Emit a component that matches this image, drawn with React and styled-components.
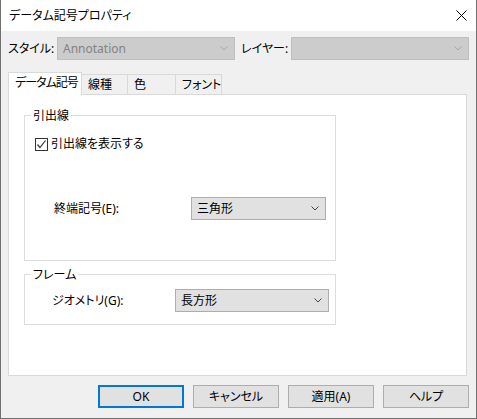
import React, { useState } from "react";
import styled, { createGlobalStyle, css } from "styled-components";

const GlobalStyle = createGlobalStyle`
  body {
    margin: 0;
    font-family: "Noto Sans", "Noto Sans CJK JP", sans-serif;
    font-size: 12px;
    font-feature-settings: "palt";
    color: #000;
  }
`;

const Window = styled.div`
  box-sizing: border-box;
  width: 477px;
  height: 419px;
  background: #f0f0f0;
  border: 1px solid #707070;
  border-top: none;
  display: flex;
  flex-direction: column;
`;

const TitleBar = styled.div`
  height: 31px;
  flex-shrink: 0;
  background: #fff;
  display: flex;
  align-items: center;
  justify-content: space-between;
  padding: 0 9px 0 8px;
  line-height: 16px;
`;

const CloseButton = styled.button`
  border: none;
  background: none;
  padding: 0;
  width: 12px;
  height: 12px;
  display: flex;
  align-items: center;
  justify-content: center;
`;

const Body = styled.div`
  flex: 1;
  display: flex;
  flex-direction: column;
  padding: 6px 7px 0 7px;
`;

const StyleRow = styled.div`
  display: flex;
  align-items: center;
  height: 23px;
`;

const FieldLabel = styled.span`
  width: ${(p) => p.w}px;
  margin-left: ${(p) => p.ml || 0}px;
  flex-shrink: 0;
  line-height: 16px;
  white-space: nowrap;
`;

const Combo = styled.div`
  box-sizing: border-box;
  width: ${(p) => p.w}px;
  height: 23px;
  display: flex;
  align-items: center;
  justify-content: space-between;
  padding: 0 6px 0 5px;
  background: #e1e1e1;
  border: 1px solid #adadad;
  line-height: 16px;
  ${(p) =>
    p.disabled &&
    css`
      background: #cccccc;
      border-color: #bfbfbf;
      color: #838383;
    `}
`;

const TabRow = styled.div`
  display: flex;
  align-items: flex-end;
  margin-top: 12px;
  height: 22px;
  position: relative;
  z-index: 1;
`;

const Tab = styled.div`
  box-sizing: border-box;
  width: ${(p) => p.w}px;
  height: 20px;
  display: flex;
  align-items: center;
  padding-left: 6px;
  line-height: 16px;
  white-space: nowrap;
  background: #f0f0f0;
  border: 1px solid #d9d9d9;
  border-left: none;
  border-bottom: none;
  ${(p) =>
    p.active &&
    css`
      height: 23px;
      margin-bottom: -1px;
      padding-left: 6px;
      padding-bottom: 3px;
      letter-spacing: -1px;
      background: #fff;
      border-left: 1px solid #d9d9d9;
    `}
`;

const Panel = styled.div`
  box-sizing: border-box;
  height: 282px;
  margin-right: 2px;
  background: #fff;
  border: 1px solid #d9d9d9;
  padding: 20px 0 0 15px;
  display: flex;
  flex-direction: column;
`;

const Group = styled.div`
  box-sizing: border-box;
  width: 312px;
  border: 1px solid #dcdcdc;
  display: flex;
  flex-direction: column;
  padding: 0 0 ${(p) => p.pb}px ${(p) => p.pl}px;
  & + & {
    margin-top: 13px;
  }
`;

const Legend = styled.span`
  align-self: flex-start;
  margin: -8px 0 0 -${(p) => p.back - 6}px;
  padding: 0 2px;
  background: #fff;
  line-height: 16px;
`;

const CheckRow = styled.label`
  display: flex;
  align-items: center;
  gap: 3px;
  margin-top: 12px;
  line-height: 16px;
  cursor: default;
`;

const CheckBox = styled.span`
  box-sizing: border-box;
  width: 13px;
  height: 13px;
  border: 1px solid #333;
  background: #fff;
  display: flex;
  align-items: center;
  justify-content: center;
`;

const FormRow = styled.div`
  display: flex;
  align-items: center;
  margin-top: ${(p) => p.mt}px;
  padding-left: ${(p) => p.indent}px;
`;

const ButtonBar = styled.div`
  display: flex;
  justify-content: flex-end;
  gap: 9px;
  margin-top: 9px;
`;

const Button = styled.button`
  box-sizing: border-box;
  width: 86px;
  height: 23px;
  padding: 0;
  font: inherit;
  line-height: 16px;
  color: #000;
  background: #e1e1e1;
  border: 1px solid #adadad;
  ${(p) =>
    p.primary &&
    css`
      border: 2px solid #0078d7;
    `}
`;

const Chevron = ({ color = "#444" }) => (
  <svg width="8" height="5" viewBox="0 0 8 5">
    <polyline points="0.5,0.5 4,4 7.5,0.5" fill="none" stroke={color} strokeWidth="1" />
  </svg>
);

const App = () => {
  const [showLeader, setShowLeader] = useState(true);
  const tabs = [
    { label: "データム記号", w: 74 },
    { label: "線種", w: 46 },
    { label: "色", w: 48 },
    { label: "フォント", w: 46 },
  ];

  return (
    <>
      <GlobalStyle />
      <Window>
        <TitleBar>
          <span>データム記号プロパティ</span>
          <CloseButton>
            <svg width="11" height="11" viewBox="0 0 11 11">
              <path d="M0.5 0.5 L10.5 10.5 M10.5 0.5 L0.5 10.5" stroke="#000" strokeWidth="1" />
            </svg>
          </CloseButton>
        </TitleBar>
        <Body>
          <StyleRow>
            <FieldLabel w={49}>スタイル:</FieldLabel>
            <Combo w={178} disabled>
              <span>Annotation</span>
              <Chevron color="#a6a6a6" />
            </Combo>
            <FieldLabel w={50} ml={6}>レイヤー:</FieldLabel>
            <Combo w={178} disabled>
              <span />
              <Chevron color="#a6a6a6" />
            </Combo>
          </StyleRow>

          <TabRow>
            {tabs.map((t, i) => (
              <Tab key={t.label} w={t.w} active={i === 0}>
                {t.label}
              </Tab>
            ))}
          </TabRow>
          <Panel>
            <Group pl={10} pb={40}>
              <Legend back={10}>引出線</Legend>
              <CheckRow onClick={() => setShowLeader(!showLeader)}>
                <CheckBox>
                  {showLeader && (
                    <svg width="11" height="11" viewBox="0 0 11 11">
                      <polyline points="1.5,5.5 4,8.5 9.5,1.5" fill="none" stroke="#333" strokeWidth="1.2" />
                    </svg>
                  )}
                </CheckBox>
                引出線を表示する
              </CheckRow>
              <FormRow mt={45} indent={19}>
                <FieldLabel w={137}>終端記号(E):</FieldLabel>
                <Combo w={135}>
                  <span>三角形</span>
                  <Chevron />
                </Combo>
              </FormRow>
            </Group>
            <Group pl={27} pb={12}>
              <Legend back={27}>フレーム</Legend>
              <FormRow mt={6} indent={0}>
                <FieldLabel w={123}>ジオメトリ(G):</FieldLabel>
                <Combo w={154}>
                  <span>長方形</span>
                  <Chevron />
                </Combo>
              </FormRow>
            </Group>
          </Panel>

          <ButtonBar>
            <Button primary>OK</Button>
            <Button>キャンセル</Button>
            <Button>適用(A)</Button>
            <Button>ヘルプ</Button>
          </ButtonBar>
        </Body>
      </Window>
    </>
  );
};

export default App;
